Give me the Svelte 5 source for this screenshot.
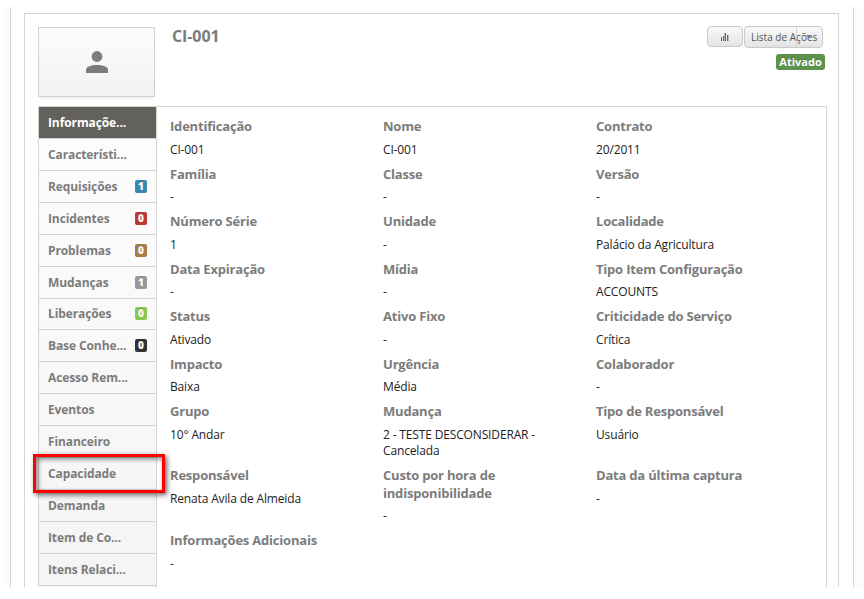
<script>
  const menu = [
    { label: 'Informaçõe...', active: true },
    { label: 'Característi...' },
    { label: 'Requisições', count: 1, color: '#3a87ad' },
    { label: 'Incidentes', count: 0, color: '#bd362f' },
    { label: 'Problemas', count: 0, color: '#ab7a4b' },
    { label: 'Mudanças', count: 1, color: '#999999' },
    { label: 'Liberações', count: 0, color: '#8bc64f' },
    { label: 'Base Conhe...', count: 0, color: '#333333' },
    { label: 'Acesso Rem...' },
    { label: 'Eventos' },
    { label: 'Financeiro' },
    { label: 'Capacidade', marked: true },
    { label: 'Demanda' },
    { label: 'Item de Co...' },
    { label: 'Itens Relaci...' },
    { label: '' }
  ];
  const fields = [
    ['Identificação', 'CI-001'], ['Nome', 'CI-001'], ['Contrato', '20/2011'],
    ['Família', '-'], ['Classe', '-'], ['Versão', '-'],
    ['Número Série', '1'], ['Unidade', '-'], ['Localidade', 'Palácio da Agricultura'],
    ['Data Expiração', '-'], ['Mídia', '-'], ['Tipo Item Configuração', 'ACCOUNTS'],
    ['Status', 'Ativado'], ['Ativo Fixo', '-'], ['Criticidade do Serviço', 'Crítica'],
    ['Impacto', 'Baixa'], ['Urgência', 'Média'], ['Colaborador', '-'],
    ['Grupo', '10° Andar'], ['Mudança', '2 - TESTE DESCONSIDERAR - Cancelada'], ['Tipo de Responsável', 'Usuário'],
    ['Responsável', 'Renata Avila de Almeida'], ['Custo por hora de indisponibilidade', '-'], ['Data da última captura', '-'],
    ['Informações Adicionais', '-']
  ];
</script>

<div class="page">
  <div class="outer">
    <div class="card">
      <header>
        <div class="photo">
          <svg width="22" height="22" viewBox="0 0 22 22" fill="#7c7c7c">
            <circle cx="11" cy="5.5" r="5.4" />
            <path d="M0 22v-3.2C0 15.6 5.5 14 11 14s11 1.6 11 4.8V22z" />
          </svg>
        </div>
        <h1>CI-001</h1>
        <div class="side">
          <div class="buttons">
            <button class="chart" aria-label="Gráfico">
              <svg width="8" height="8" viewBox="0 0 8 8" fill="#666">
                <path d="M0 4h1v4H0zM2 3h1v5H2zM3.6 0h1.4v8H3.6zM6 2h1.4v6H6z" />
              </svg>
            </button>
            <button class="actions">
              Lista de Ações
              <span class="split"><i></i></span>
            </button>
          </div>
          <span class="status">Ativado</span>
        </div>
      </header>
      <div class="body">
        <nav>
          {#each menu as item}
            <div class="item" class:active={item.active}>
              <span>{item.label}</span>
              {#if item.count !== undefined}
                <b style:background={item.color}>{item.count}</b>
              {/if}
              {#if item.marked}<div class="mark"></div>{/if}
            </div>
          {/each}
        </nav>
        <main>
          {#each fields as [label, value]}
            <div class="field">
              <strong>{label}</strong>
              <p>{value}</p>
            </div>
          {/each}
        </main>
      </div>
    </div>
  </div>
</div>

<style>
  :global(body) { background: #fff; }
  .page {
    width: 864px;
    height: 599px;
    overflow: hidden;
    box-sizing: border-box;
    padding: 7px 0 12px 4px;
    font-family: 'Open Sans', 'Noto Sans', sans-serif;
  }
  .outer {
    box-sizing: border-box;
    width: 860px;
    height: 580px;
    overflow: hidden;
    padding: 6px 14px 0 20px;
    background: linear-gradient(90deg, #fcfcfc 6px, #d4d4d4 6px, #d4d4d4 7px, #fff 7px, #fff 849px, #d4d4d4 849px, #d4d4d4 850px, #fcfcfc 850px);
  }
  .card {
    box-sizing: border-box;
    width: 815px;
    height: 620px;
    border: 1px solid #d4d4d4;
    padding: 13px 11px 0 13px;
  }
  header { display: flex; height: 79px; }
  .photo {
    box-sizing: border-box;
    width: 117px;
    height: 70px;
    border: 1px solid #d2d2d2;
    background: linear-gradient(#fdfdfd, #f1f1f1);
    box-shadow: 0 3px 2px -2px rgba(0, 0, 0, 0.09);
    display: flex;
    align-items: center;
    justify-content: center;
  }
  h1 {
    margin: -2px 0 0 17px;
    font-size: 16px;
    line-height: 22px;
    font-weight: 700;
    letter-spacing: -0.1px;
    color: #7c7c7c;
  }
  .side {
    margin-left: auto;
    margin-top: -1px;
    padding-right: 2px;
    display: flex;
    flex-direction: column;
    align-items: flex-end;
  }
  .buttons { display: flex; gap: 1px; padding-right: 2px; height: 28px; align-items: flex-start; }
  button {
    box-sizing: border-box;
    font-family: inherit;
    margin: 0;
    padding: 0;
    border: 1px solid #c9c9c9;
    border-radius: 4px;
    background: linear-gradient(#f9f9f9, #e4e4e4);
    color: #555;
  }
  .chart { width: 36px; height: 21px; display: flex; align-items: center; justify-content: center; }
  .actions {
    position: relative;
    width: 79px;
    height: 22px;
    padding-left: 6px;
    text-align: left;
    font-size: 10px;
    line-height: 18px;
    letter-spacing: 0.02px;
    white-space: nowrap;
  }
  .split {
    position: absolute;
    right: 0;
    top: 0;
    width: 25px;
    height: 20px;
    border-left: 1px solid #d0d0d0;
  }
  .split i {
    position: absolute;
    left: 9px;
    top: 8px;
    border: 3px solid transparent;
    border-top-color: #777;
    border-bottom: 0;
  }
  .status {
    background: #5d914e;
    color: #fff;
    font-size: 11px;
    font-weight: 700;
    line-height: 16px;
    height: 16px;
    width: 49px;
    text-align: center;
    border-radius: 3px;
    text-shadow: 0 -1px 0 rgba(0, 0, 0, 0.2);
  }
  .body {
    box-sizing: border-box;
    width: 789px;
    height: 540px;
    border: 1px solid #d4d4d4;
    display: flex;
  }
  nav {
    width: 117px;
    flex: none;
    border-right: 1px solid #d4d4d4;
    background: linear-gradient(#fdfdfd, #f3f3f3);
  }
  .item {
    position: relative;
    box-sizing: border-box;
    height: 31.93px;
    border-bottom: 1px solid #d4d4d4;
    padding: 0 9px 0 9px;
    display: flex;
    align-items: center;
    justify-content: space-between;
    font-size: 12px;
    font-weight: 700;
    letter-spacing: -0.1px;
    color: #7c7c7c;
    white-space: nowrap;
  }
  .active { background: #62615c; color: #fff; }
  .item b {
    width: 12px;
    height: 13px;
    border-radius: 2px;
    color: #fff;
    font-size: 10px;
    letter-spacing: 0;
    line-height: 13px;
    text-align: center;
    text-shadow: 0 -1px 0 rgba(0, 0, 0, 0.25);
  }
  .mark {
    position: absolute;
    z-index: 1;
    left: -6px;
    top: -4px;
    width: 126px;
    height: 33px;
    border: 3px solid #fe0000;
    box-shadow: 2px 2px 5px rgba(0, 0, 0, 0.6), inset 2px 2px 5px rgba(0, 0, 0, 0.5);
  }
  main {
    flex: 1;
    display: grid;
    grid-template-columns: 213px 213px 213px;
    align-content: start;
    padding: 11px 0 0 13px;
  }
  .field { width: 165px; padding-bottom: 7.5px; }
  strong {
    display: block;
    font-size: 13px;
    line-height: 17.7px;
    font-weight: 700;
    letter-spacing: -0.2px;
    color: #7c7c7c;
  }
  p {
    margin: 6px 0 0;
    font-size: 12px;
    line-height: 16.3px;
    letter-spacing: -0.15px;
    color: #222;
  }
</style>
